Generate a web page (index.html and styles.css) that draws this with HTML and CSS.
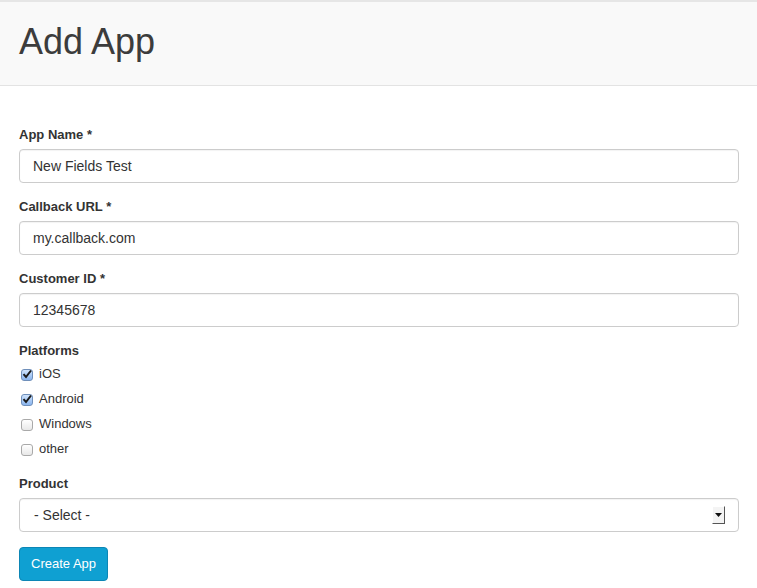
FILE: index.html
```html
<!DOCTYPE html>
<html>
<head>
<meta charset="utf-8">
<link rel="stylesheet" href="styles.css">
</head>
<body>
<header class="page-header">
  <h1>Add App</h1>
</header>
<form class="form">
  <div class="group">
    <label class="lbl">App Name *</label>
    <div class="input">New Fields Test</div>
  </div>
  <div class="group">
    <label class="lbl">Callback URL *</label>
    <div class="input">my.callback.com</div>
  </div>
  <div class="group">
    <label class="lbl">Customer ID *</label>
    <div class="input">12345678</div>
  </div>
  <div class="group platforms">
    <label class="lbl">Platforms</label>
    <div class="checks">
      <div class="check"><span class="box checked"><svg viewBox="0 0 12 12" width="12" height="12"><path d="M2.5 6.2 L5 9 L10 2.5" fill="none" stroke="#1a1a1a" stroke-width="2"/></svg></span>iOS</div>
      <div class="check"><span class="box checked"><svg viewBox="0 0 12 12" width="12" height="12"><path d="M2.5 6.2 L5 9 L10 2.5" fill="none" stroke="#1a1a1a" stroke-width="2"/></svg></span>Android</div>
      <div class="check"><span class="box"></span>Windows</div>
      <div class="check"><span class="box"></span>other</div>
    </div>
  </div>
  <div class="group">
    <label class="lbl">Product</label>
    <div class="input select"><span>- Select -</span><span class="arrow"><svg viewBox="0 0 7 4" width="7" height="4"><path d="M0 0 H7 L3.5 4 Z" fill="#111"/></svg></span></div>
  </div>
  <button type="button" class="btn">Create App</button>
</form>
</body>
</html>
```
FILE: styles.css
```css
html, body { margin: 0; padding: 0; }
body {
  font-family: "Liberation Sans", Arial, sans-serif;
  color: #333;
  background: #fff;
  width: 757px;
  height: 588px;
  overflow: hidden;
}
.page-header {
  background: #f9f9f9;
  border-top: 2px solid #e6e6e6;
  border-bottom: 1px solid #e3e3e3;
  height: 83px;
  box-sizing: content-box;
  padding: 0 19px;
}
.page-header h1 {
  margin: 0;
  padding-top: 20px;
  font-size: 36px;
  font-weight: normal;
  line-height: 40px;
  color: #3c3c3c;
}
.form {
  padding: 40px 19px 0 19px;
  display: flex;
  flex-direction: column;
}
.group {
  display: flex;
  flex-direction: column;
  margin-bottom: 15px;
}
.lbl {
  font-size: 13px;
  font-weight: bold;
  line-height: 18px;
  margin-bottom: 5px;
  color: #333;
}
.input {
  height: 34px;
  width: 720px;
  box-sizing: border-box;
  border: 1px solid #ccc;
  border-radius: 4px;
  padding: 0 13px;
  font-size: 14px;
  line-height: 32px;
  color: #333;
  box-shadow: inset 0 1px 1px rgba(0,0,0,0.05);
}
.platforms { margin-bottom: 14px; }
.platforms .lbl { margin-bottom: 1px; }
.checks { display: flex; flex-direction: column; }
.check {
  display: flex;
  align-items: center;
  height: 25px;
  font-size: 13px;
  color: #333;
}
.box {
  width: 12px;
  height: 12px;
  border: 1px solid #a9a9a9;
  border-radius: 3px;
  background: linear-gradient(#fff, #e8e8e8);
  margin: 3px 6px 0 2px;
  position: relative;
  box-sizing: border-box;
}
.box.checked {
  background: linear-gradient(#cfe3fb, #8ab5ef);
  border-color: #6f8fba;
}
.box svg { position: absolute; left: -1px; top: -2px; }
.select {
  display: flex;
  justify-content: space-between;
  align-items: center;
  padding: 0 13px 0 14px;
}
.arrow {
  width: 13px;
  height: 18px;
  background: #f4f4f4;
  border-right: 1px solid #555;
  border-bottom: 1px solid #555;
  border-top: 1px solid #fff;
  border-left: 1px solid #fff;
  box-sizing: border-box;
  display: flex;
  align-items: center;
  justify-content: center;
}
.btn {
  align-self: flex-start;
  margin-top: 0;
  height: 34px;
  padding: 0 11px;
  background: #0fa0d2;
  border: 1px solid #0c86b5;
  border-radius: 4px;
  color: #fff;
  font-family: "Liberation Sans", Arial, sans-serif;
  font-size: 13px;
  line-height: 32px;
}
```
